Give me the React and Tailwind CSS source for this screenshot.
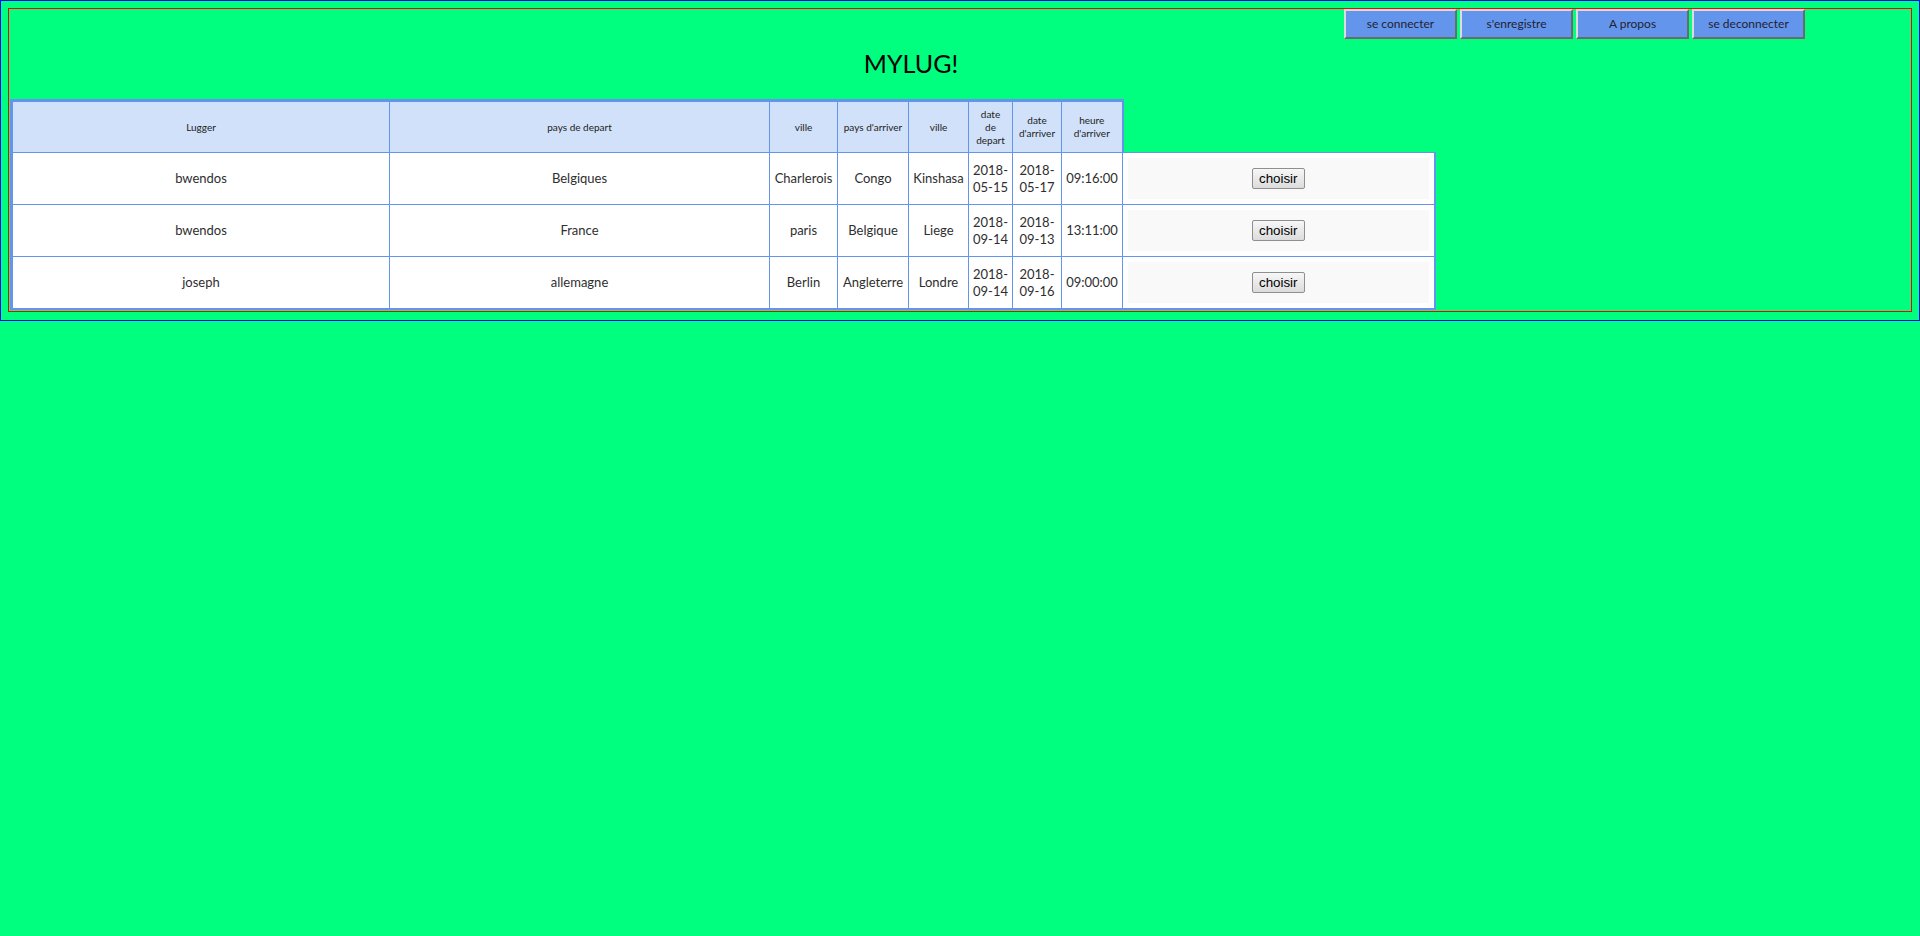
const rows = [
  { lugger: "bwendos", from: "Belgiques", ville1: "Charlerois", to: "Congo", ville2: "Kinshasa", dep: "05-15", arr: "05-17", heure: "09:16:00" },
  { lugger: "bwendos", from: "France", ville1: "paris", to: "Belgique", ville2: "Liege", dep: "09-14", arr: "09-13", heure: "13:11:00" },
  { lugger: "joseph", from: "allemagne", ville1: "Berlin", to: "Angleterre", ville2: "Londre", dep: "09-14", arr: "09-16", heure: "09:00:00" },
];

const navItems = ["se connecter", "s'enregistre", "A propos", "se deconnecter"];

function NavButton({ label }) {
  return (
    <button className="h-[30px] w-[113px] border-2 border-t-[#dcdcdc] border-l-[#dcdcdc] border-b-[#6b6b6b] border-r-[#6b6b6b] bg-[#6495ed] text-[12px] text-[#22222e]">
      {label}
    </button>
  );
}

export default function App() {
  const th = "h-[52px] border border-[#6495ed] border-t-[3px] bg-[#d0e1f9] px-1 text-center align-middle text-[10px] leading-[13px] font-normal text-[#222]";
  const td = "h-[51px] border border-[#6495ed] bg-white px-1 text-center align-middle text-[13px] leading-[17px] text-[#2e2e2e]";

  return (
    <div className="min-h-[936px] bg-[#00ff7f] font-['Lato',sans-serif]">
      <div className="border border-[#0000ff] p-[7px] pb-[8px]">
        <div className="border border-[#ff0000]">
          {/* menu */}
          <div className="flex justify-end gap-[3px] pr-[106px]">
            {navItems.map((item) => (
              <NavButton key={item} label={item} />
            ))}
          </div>

          <div className="h-[60px] pt-[9px] pr-[98px] text-center text-[25px] leading-[30px] text-black">MYLUG!</div>

          <table className="ml-px mb-px w-[1424px] table-fixed border-collapse">
            <colgroup>
              <col className="w-[378px]" />
              <col className="w-[380px]" />
              <col className="w-[68px]" />
              <col className="w-[71px]" />
              <col className="w-[60px]" />
              <col className="w-[44px]" />
              <col className="w-[49px]" />
              <col className="w-[61px]" />
              <col className="w-[312px]" />
            </colgroup>
            <thead>
              <tr>
                <th className={th + " border-l-[3px]"}>Lugger</th>
                <th className={th}>pays de depart</th>
                <th className={th}>ville</th>
                <th className={th + " whitespace-nowrap"}>pays d'arriver</th>
                <th className={th}>ville</th>
                <th className={th}>date<br />de<br />depart</th>
                <th className={th}>date<br />d'arriver</th>
                <th className={th + " border-r-2"}>heure<br />d'arriver</th>
              </tr>
            </thead>
            <tbody>
              {rows.map((r, i) => {
                const last = i === rows.length - 1;
                const cell = td + (last ? " border-b-2" : "");
                return (
                  <tr key={i}>
                    <td className={cell + " border-l-[3px]"}>{r.lugger}</td>
                    <td className={cell}>{r.from}</td>
                    <td className={cell}>{r.ville1}</td>
                    <td className={cell}>{r.to}</td>
                    <td className={cell}>{r.ville2}</td>
                    <td className={cell}>2018-<br />{r.dep}</td>
                    <td className={cell}>2018-<br />{r.arr}</td>
                    <td className={cell + " whitespace-nowrap"}>{r.heure}</td>
                    <td className={(last ? "border-b-2 " : "") + "border border-r-2 border-[#6495ed] bg-white p-[5px]"}>
                      <div className="flex h-[41px] items-center justify-center bg-[#f9f9f9]">
                        <button className="h-[21px] w-[53px] rounded-[2px] border border-[#8f8f8f] bg-linear-to-b from-[#f7f7f7] to-[#dcdcdc] font-['Liberation_Sans',Arial,sans-serif] text-[13.33px] leading-none text-black">
                          choisir
                        </button>
                      </div>
                    </td>
                  </tr>
                );
              })}
            </tbody>
          </table>
        </div>
      </div>
    </div>
  );
}
